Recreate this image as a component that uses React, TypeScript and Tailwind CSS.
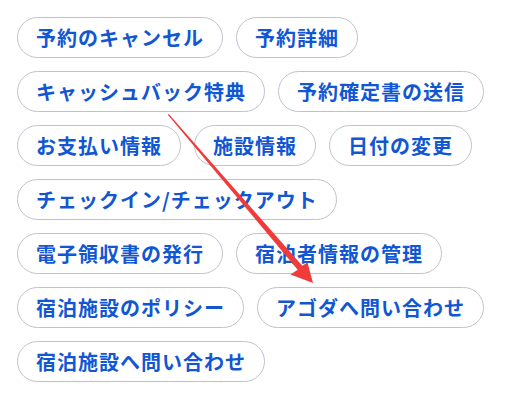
const items = [
  '予約のキャンセル',
  '予約詳細',
  'キャッシュバック特典',
  '予約確定書の送信',
  'お支払い情報',
  '施設情報',
  '日付の変更',
  'チェックイン/チェックアウト',
  '電子領収書の発行',
  '宿泊者情報の管理',
  '宿泊施設のポリシー',
  'アゴダへ問い合わせ',
  '宿泊施設へ問い合わせ',
];

function Chip({ label }: { label: string }) {
  return (
    <button className="flex h-[41px] items-center rounded-full border border-[#bfc3ce] bg-white px-[18px] text-[20px] font-bold leading-none tracking-[1px] text-[#1157d3]">
      {label}
    </button>
  );
}

export default function App() {
  return (
    <div className="relative h-[400px] w-[505px] overflow-hidden bg-white font-['Noto_Sans_CJK_JP',sans-serif]">
      <div className="flex flex-wrap gap-[13px] pl-[17px] pt-[17px]">
        {items.map(t => <Chip key={t} label={t} />)}
      </div>
      {/* annotation arrow */}
      <svg className="pointer-events-none absolute left-0 top-0" width="505" height="400" viewBox="0 0 505 400">
        <polygon
          fill="#f03b3b"
          points="167.8,114.7 297.7,269.8 290.5,274.5 313,283 307.5,262.5 302.3,265.8 168.8,113.9"
        />
      </svg>
    </div>
  );
}
